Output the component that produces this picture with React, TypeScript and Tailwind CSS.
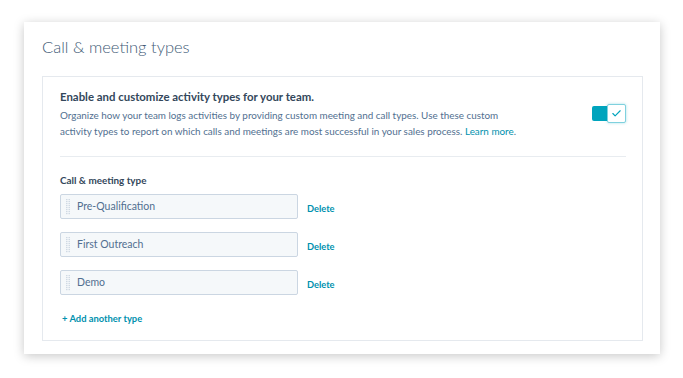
import { Check } from 'lucide-react';

const types = ['Pre-Qualification', 'First Outreach', 'Demo'];

function Grip() {
  return (
    <svg width="4" height="16" viewBox="0 0 4 16" className="shrink-0">
      {Array.from({ length: 8 }).map((_, i) => (
        <g key={i} fill="#d0d9e3">
          <rect x="0" y={i * 2} width="1.5" height="1.2" />
          <rect x="2.5" y={i * 2} width="1.5" height="1.2" />
        </g>
      ))}
    </svg>
  );
}

function Toggle() {
  return (
    <div className="relative w-[34px] h-[19px] mt-[14px]">
      <div className="absolute left-0 top-[2px] w-[30px] h-[15px] bg-[#00a4bd] rounded-[2px]" />
      <div className="absolute right-0 top-0 w-[19px] h-[19px] bg-white border border-[#7fd1de] rounded-[2px] flex items-center justify-center shadow-[0_0_3px_rgba(0,164,189,0.35)]">
        <Check className="w-[11px] h-[11px] text-[#00a4bd]" strokeWidth={2.5} />
      </div>
    </div>
  );
}

export default function App() {
  return (
    <div
      className="w-[683px] h-[378px] bg-white pt-[22px] pl-[24px]"
      style={{ fontFamily: 'Lato, "Open Sans", sans-serif' }}
    >
      <div className="w-[636px] h-[332px] bg-white shadow-[0_2px_10px_rgba(0,0,0,0.22)] px-[18px] pt-[15px]">
        <h1 className="text-[16.5px] leading-[20px] font-light text-[#425b76]">
          Call &amp; meeting types
        </h1>

        <div className="mt-[19px] w-[601px] h-[265px] border border-[#e5e9ee] pl-[17px] pr-[16px] pt-[13px]">
          <div className="flex justify-between">
            <div>
              <h2 className="text-[11.4px] leading-[14px] font-bold text-[#33475b]">
                Enable and customize activity types for your team.
              </h2>
              <p className="mt-[3px] text-[9.9px] leading-[16px] text-[#516f90] whitespace-nowrap">
                Organize how your team logs activities by providing custom meeting and call types. Use these custom
                <br />
                activity types to report on which calls and meetings are most successful in your sales process.{' '}
                <span className="text-[#0091ae]">Learn more</span>.
              </p>
            </div>
            <Toggle />
          </div>

          <div className="mt-[17px] border-t border-[#e8ecf0]" />

          <div className="mt-[17px] text-[9.9px] leading-[12px] font-bold text-[#33475b]">
            Call &amp; meeting type
          </div>

          <div className="mt-[8px] flex flex-col gap-[13px]">
            {types.map((t) => (
              <div key={t} className="flex items-center">
                <div className="w-[238px] h-[25px] bg-[#f5f8fa] border border-[#cbd6e2] rounded-[2px] flex items-center pl-[5px]">
                  <Grip />
                  <span className="ml-[7px] text-[10.5px] text-[#516f90]">{t}</span>
                </div>
                <span className="ml-[9px] mt-[4px] text-[9.3px] font-bold text-[#0091ae]">Delete</span>
              </div>
            ))}
          </div>

          <div className="mt-[18px] ml-[2px] text-[9.4px] leading-[12px] font-bold text-[#0091ae]">
            + Add another type
          </div>
        </div>
      </div>
    </div>
  );
}
